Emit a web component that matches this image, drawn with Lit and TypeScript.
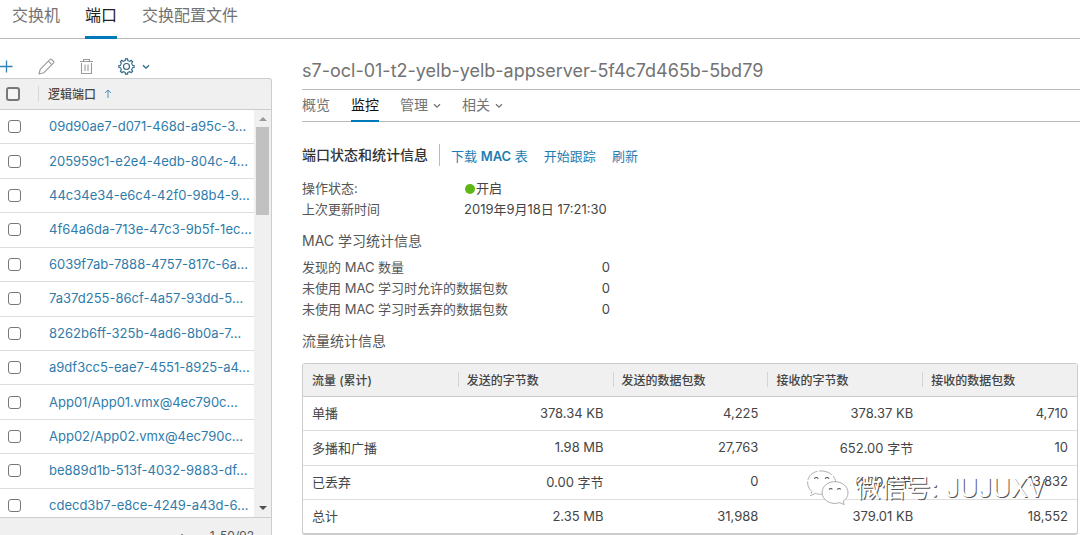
import { LitElement, html, css, svg } from "lit";
import { customElement, state } from "lit/decorators.js";

const PORTS = [
  "09d90ae7-d071-468d-a95c-3…",
  "205959c1-e2e4-4edb-804c-4…",
  "44c34e34-e6c4-42f0-98b4-9…",
  "4f64a6da-713e-47c3-9b5f-1ec…",
  "6039f7ab-7888-4757-817c-6a…",
  "7a37d255-86cf-4a57-93dd-5…",
  "8262b6ff-325b-4ad6-8b0a-7…",
  "a9df3cc5-eae7-4551-8925-a4…",
  "App01/App01.vmx@4ec790c…",
  "App02/App02.vmx@4ec790c…",
  "be889d1b-513f-4032-9883-df…",
  "cdecd3b7-e8ce-4249-a43d-6…",
];

const COLUMNS = ["流量 (累计)", "发送的字节数", "发送的数据包数", "接收的字节数", "接收的数据包数"];

const TRAFFIC = [
  ["单播", "378.34 KB", "4,225", "378.37 KB", "4,710"],
  ["多播和广播", "1.98 MB", "27,763", "652.00 字节", "10"],
  ["已丢弃", "0.00 字节", "0", "0.00 字节", "13,832"],
  ["总计", "2.35 MB", "31,988", "379.01 KB", "18,552"],
];

const caret = html`<svg class="caret" width="8" height="6" viewBox="0 0 8 6" aria-hidden="true">
  <path d="M1 1.2 4 4.2 7 1.2" fill="none" stroke="currentColor" stroke-width="1.3" />
</svg>`;

const gearTeeth = Array.from({ length: 8 }, (_, i) => i * 45);

@customElement("port-list")
export class PortList extends LitElement {
  @state() private selected = new Set<string>();

  static styles = css`
    :host { display: block; }
    .toolbar { display: flex; align-items: center; height: 23px; }
    .tool { display: flex; align-items: center; padding: 0; border: 0; background: none; color: #9a9a9a; }
    .add { width: 38px; color: #2f82b5; }
    .edit { width: 41px; }
    .remove { width: 39px; }
    .settings { gap: 7px; color: #2b6685; }
    .grid { border: 1px solid #ccc; border-left: 0; border-radius: 0 3px 0 0; background: #f0f0f0; }
    .head { display: flex; align-items: center; height: 31px; padding-bottom: 1px; box-sizing: border-box; border-bottom: 1px solid #ccc; }
    input {
      appearance: none; box-sizing: border-box; width: 13px; height: 13px; margin: 0;
      border: 1px solid #777; border-radius: 3px; background: #fff; flex: none;
    }
    input:checked { background: #0079b8; }
    .head input { margin-left: 6px; width: 14px; height: 14px; border-width: 2px; background: #f4f4f4; }
    .title {
      display: flex; align-items: center; gap: 8px; margin-left: 18px; padding-left: 9px;
      height: 16px; border-left: 1px solid #d8d8d8; font-size: 12px; font-weight: 500; color: #4a4a4a;
    }
    .scroll { display: flex; height: 407px; overflow: hidden; }
    ul {
      flex: 1; min-width: 0; height: 413px; margin: 0; padding: 0; list-style: none; background: #fff;
      display: grid; grid-auto-rows: 1fr;
    }
    li { display: flex; align-items: center; padding-left: 8px; border-bottom: 1px solid #ddd; }
    a { margin-left: 28px; padding-bottom: 1px; color: #2f7cab; text-decoration: none; font-size: 13px; white-space: nowrap; }
    .bar { width: 17px; display: flex; flex-direction: column; align-items: center; }
    .up, .down { flex: none; width: 8px; height: 4px; }
    .up { margin: 7px 0 6px; }
    .thumb { width: 13px; height: 88px; background: #c1c1c1; }
    .down { margin: auto 0 7px; }
    footer {
      display: flex; justify-content: flex-end; align-items: center; gap: 24px; height: 35px;
      padding-right: 17px; border-top: 1px solid #ccc; font-size: 12px; color: #565656;
    }
  `;

  private toggle(name: string) {
    const next = new Set(this.selected);
    next.has(name) ? next.delete(name) : next.add(name);
    this.selected = next;
  }

  render() {
    return html`
      <div class="toolbar">
        <button class="tool add" aria-label="添加">
          <svg width="13" height="13" viewBox="0 0 13 13"><path d="M0 6.5H12.5M6.5 .5V12.5" stroke="currentColor" stroke-width="1.3" /></svg>
        </button>
        <button class="tool edit" aria-label="编辑">
          <svg width="17" height="17" viewBox="0 0 17 17" fill="none" stroke="currentColor" stroke-width="1.1" stroke-linejoin="round">
            <path d="M1 16 2.2 11.3 12.1 1.4Q12.8 .7 13.5 1.4L15.6 3.5Q16.3 4.2 15.6 4.9L5.7 14.8ZM10.4 3.2 13.8 6.6" />
          </svg>
        </button>
        <button class="tool remove" aria-label="删除">
          <svg width="15" height="17" viewBox="0 0 15 17" fill="none" stroke="currentColor" stroke-width="1.1">
            <path d="M1 3.5H14M4.5 3.5V1.5H10.5V3.5M2.5 5V15.5H12.5V5M6 6.500V13M9 6.500V13" />
          </svg>
        </button>
        <button class="tool settings" aria-label="设置">
          <svg width="17" height="17" viewBox="0 0 17 17" fill="none" stroke="currentColor">
            ${gearTeeth.map((a) => svg`<path transform="rotate(${a} 8.5 8.5)" d="M6.2 2.9 7.2 2.5 7.4 .9H9.6L9.8 2.5 10.8 2.9" stroke-width="1.1" />`)}
            <circle cx="8.5" cy="8.5" r="3" stroke-width="1.1" />
          </svg>
          ${caret}
        </button>
      </div>
      <div class="grid">
        <div class="head">
          <input type="checkbox" aria-label="全选" />
          <span class="title">逻辑端口
            <svg width="8" height="9" viewBox="0 0 8 9" fill="none" stroke="#4c8fb5"><path d="M4 9V1M1 4 4 1 7 4" /></svg>
          </span>
        </div>
        <div class="scroll">
          <ul>
            ${PORTS.map((p) => html`<li>
              <input type="checkbox" aria-label=${p} .checked=${this.selected.has(p)} @change=${() => this.toggle(p)} />
              <a href="#">${p}</a>
            </li>`)}
          </ul>
          <div class="bar">
            <svg class="up" viewBox="0 0 8 4"><path d="M0 4 4 0 8 4Z" fill="#9a9a9a" /></svg>
            <div class="thumb"></div>
            <svg class="down" viewBox="0 0 8 4"><path d="M0 0H8L4 4Z" fill="#505050" /></svg>
          </div>
        </div>
        <footer>
          <svg width="8" height="5" viewBox="0 0 8 5"><path d="M1 4 4 1 7 4" fill="none" stroke="#888" /></svg>
          <span>1-50/92</span>
        </footer>
      </div>
    `;
  }
}

@customElement("port-detail")
export class PortDetail extends LitElement {
  static styles = css`
    :host { display: block; color: #565656; font-size: 13px; }
    h1 { margin: 0; height: 37px; line-height: 37px; font-size: 18px; font-weight: 400; color: #737373; border-bottom: 1px solid #bbb; }
    nav { display: flex; gap: 21px; height: 31px; border-bottom: 1px solid #bbb; }
    nav a {
      box-sizing: border-box; display: flex; align-items: center; gap: 5px; height: 32px; padding-bottom: 4px;
      font-size: 14px; color: #737373; text-decoration: none;
    }
    nav a.active { padding-bottom: 2px; color: #111; border-bottom: 2px solid #0079b8; }
    .caret { margin-top: 3px; }
    .content { padding-right: 2px; }
    .actions { display: flex; align-items: center; height: 24px; margin-top: 21px; gap: 16px; }
    h2 { margin: 0 -5px 0 0; padding-right: 11px; line-height: 22px; font-size: 14px; font-weight: 500; color: #333; border-right: 1px solid #bbb; }
    .actions a { color: #1b7eb3; text-decoration: none; }
    .mac { font-weight: 600; }
    dl { display: grid; grid-template-columns: 162px 146px; grid-auto-rows: 21px; line-height: 21px; margin: 0; }
    .status { margin-top: 11px; }
    .learn { grid-template-columns: 242px 66px; }
    dt { white-space: nowrap; }
    dd { margin: 0; white-space: nowrap; color: #454545; }
    .learn dd { text-align: right; }
    .dot { display: inline-block; width: 10px; height: 10px; margin: 0 1px -1px 1px; border-radius: 50%; background: #5eb715; }
    h3 { margin: 11px 0 6px; line-height: 20px; font-size: 14px; font-weight: 400; color: #565656; }
    table {
      width: 100%; height: 172px; table-layout: fixed; border: 1px solid #ccc; border-bottom-width: 2px;
      border-radius: 3px; border-spacing: 0; font-size: 13px; color: #454545;
    }
    .flow { margin-bottom: 12px; }
    th { position: relative; height: 31px; padding: 0 9px 1px; text-align: left; background: #f0f0f0; border-bottom: 1px solid #ccc; font-size: 12px; font-weight: 500; }
    th + th::before { content: ""; position: absolute; left: 0; top: 8px; height: 15px; border-left: 1px solid #d4d4d4; }
    td { padding: 0 9px 2px; text-align: right; border-bottom: 1px solid #ddd; }
    td:first-child { text-align: left; }
    tr:last-child td { border-bottom: 0; }
  `;

  render() {
    return html`
      <h1>s7-ocl-01-t2-yelb-yelb-appserver-5f4c7d465b-5bd79</h1>
      <nav>
        <a href="#">概览</a>
        <a href="#" class="active">监控</a>
        <a href="#">管理 ${caret}</a>
        <a href="#">相关 ${caret}</a>
      </nav>
      <div class="content">
        <div class="actions">
          <h2>端口状态和统计信息</h2>
          <a href="#">下载 <span class="mac">MAC</span> 表</a>
          <a href="#">开始跟踪</a>
          <a href="#">刷新</a>
        </div>
        <dl class="status">
          <dt>操作状态:</dt><dd><span class="dot"></span>开启</dd>
          <dt>上次更新时间</dt><dd>2019年9月18日 17:21:30</dd>
        </dl>
        <h3>MAC 学习统计信息</h3>
        <dl class="learn">
          <dt>发现的 MAC 数量</dt><dd>0</dd>
          <dt>未使用 MAC 学习时允许的数据包数</dt><dd>0</dd>
          <dt>未使用 MAC 学习时丢弃的数据包数</dt><dd>0</dd>
        </dl>
        <h3 class="flow">流量统计信息</h3>
        <table>
          <thead><tr>${COLUMNS.map((c) => html`<th>${c}</th>`)}</tr></thead>
          <tbody>${TRAFFIC.map((r) => html`<tr>${r.map((c) => html`<td>${c}</td>`)}</tr>`)}</tbody>
        </table>
      </div>
    `;
  }
}

@customElement("app-root")
export class AppRoot extends LitElement {
  static styles = css`
    :host {
      display: block; position: relative; height: 100vh; overflow: hidden; background: #fff;
      font-family: "Inter", "Noto Sans CJK SC", sans-serif;
    }
    .tabs { display: flex; gap: 25px; height: 38px; padding-left: 12px; border-bottom: 1px solid #bbb; }
    .tabs a { box-sizing: border-box; height: 39px; line-height: 30px; font-size: 16px; color: #737373; text-decoration: none; }
    .tabs a.active { color: #222; border-bottom: 3px solid #0079b8; }
    .body { display: grid; grid-template-columns: 272px minmax(0, 1fr); column-gap: 30px; }
    port-list { margin-top: 16px; }
    port-detail { margin-top: 13px; }
    .watermark {
      position: absolute; right: 35px; bottom: 28px; display: flex; align-items: center; gap: 7px;
      font-size: 25px; line-height: 36px; font-weight: 400; color: #fff; white-space: nowrap;
      text-shadow: 1px 1px 0 #555;
    }
  `;

  render() {
    return html`
      <nav class="tabs">
        <a href="#">交换机</a>
        <a href="#" class="active">端口</a>
        <a href="#">交换配置文件</a>
      </nav>
      <div class="body">
        <port-list></port-list>
        <port-detail></port-detail>
      </div>
      <div class="watermark">
        <svg width="43" height="38" viewBox="0 0 44 38" fill="#fff" stroke="#999" stroke-width=".8">
          <path d="M17 25C14 26 11 25 9.500 24.500L4.500 27 6 22.500C-2 16 1 2 15 1.500 24 1.500 30 7 30.500 13" stroke-dasharray="14 1.500" />
          <path d="M29.500 12.500C37 12.500 43 17.500 43 24 43 27.500 41 30.500 38 32.500L39 36 34.500 34C25 37 16.500 31 16.500 24 16.500 17.500 22 12.500 29.500 12.500Z" />
          <path d="M8.500 9.500Q10.500 7 12.500 9.500M19.500 9.500Q21.500 7 23.500 9.500M23.500 20.500Q25.500 18.500 27 20.500M32 20.500Q34 18.500 35.500 20.500" fill="none" stroke="#555" stroke-width="1.2" />
        </svg>
        <span>微信号: JUJUXV</span>
      </div>
    `;
  }
}
